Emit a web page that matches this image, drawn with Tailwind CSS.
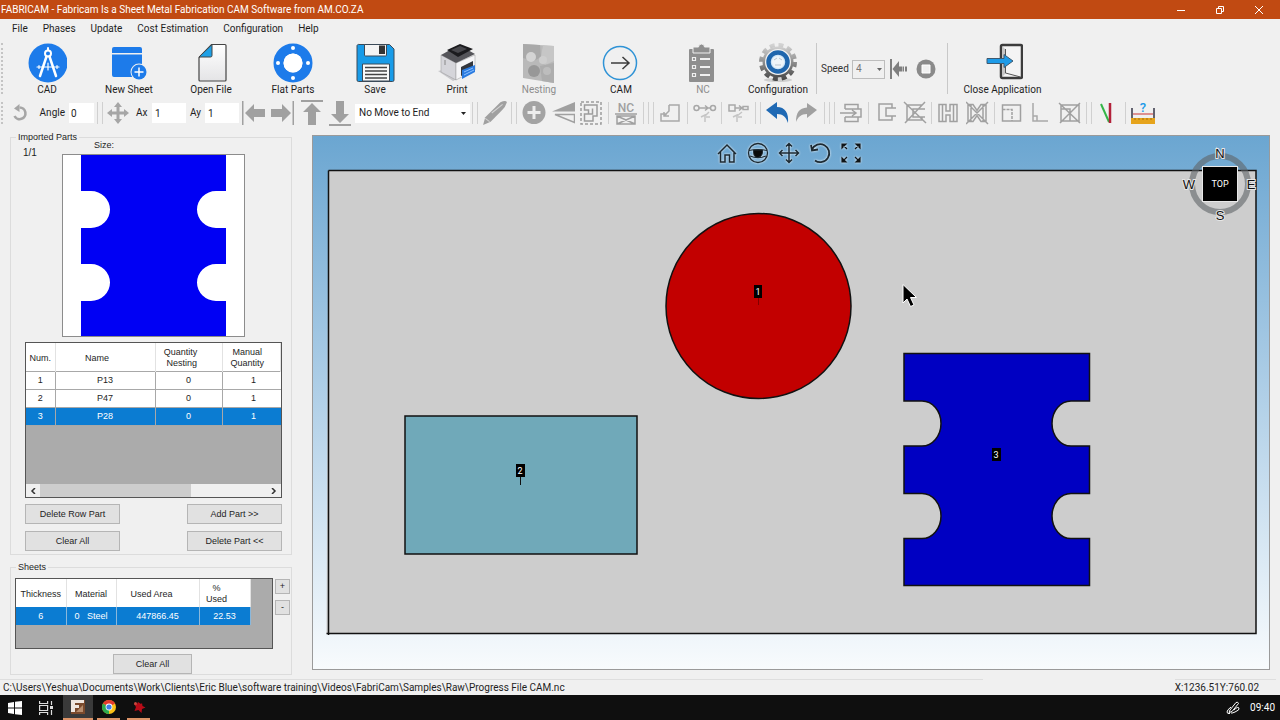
<!DOCTYPE html>
<html lang="en">

<head>
  <meta charset="UTF-8" />
  <meta name="viewport" content="width=device-width, initial-scale=1.0" />
  <title>FABRICAM</title>
  <script src="https://cdn.jsdelivr.net/npm/@tailwindcss/browser@4"></script>
</head>

<body class="h-screen flex flex-col overflow-hidden bg-[#f0f0f0] font-['Roboto','Open_Sans',sans-serif] text-[10px] leading-[14px] text-[#1e1e1e]">

  <!-- Title bar -->
  <header class="h-[19px] shrink-0 flex items-center justify-between bg-[#c14a12] text-white pl-px pr-[2px]">
    <h1>FABRICAM - Fabricam Is a Sheet Metal Fabrication CAM Software from AM.CO.ZA</h1>
    <div class="flex">
      <button type="button" aria-label="Minimize" class="w-[39px] flex justify-center">
        <svg class="size-[10px]" viewBox="0 0 10 10" stroke="#fff"><path d="M1 5.500h8" /></svg>
      </button>
      <button type="button" aria-label="Restore" class="w-[39px] flex justify-center">
        <svg class="size-[10px]" viewBox="0 0 10 10" fill="none" stroke="#fff"><path d="M1.500 3.500h5v5h-5zM3.500 3.500v-2h5v5h-2" /></svg>
      </button>
      <button type="button" aria-label="Close" class="w-[39px] flex justify-center">
        <svg class="size-[10px]" viewBox="0 0 10 10" stroke="#fff"><path d="M1 1l8 8M9 1l-8 8" /></svg>
      </button>
    </div>
  </header>

  <!-- Menu -->
  <nav class="h-5 shrink-0 flex items-center gap-[15px] pl-3">
    <button type="button">File</button>
    <button type="button">Phases</button>
    <button type="button">Update</button>
    <button type="button">Cost Estimation</button>
    <button type="button">Configuration</button>
    <button type="button">Help</button>
  </nav>

  <!-- Main toolbar -->
  <div class="h-[59px] shrink-0 flex pt-1">
    <div class="w-[3px] mr-[3px] mb-1 border-r-2 border-dotted border-[#c4c4c4]"></div>
    <button type="button" class="w-[82px] flex flex-col items-center">
      <svg class="size-10" viewBox="0 0 40 40">
        <circle cx="21" cy="20" r="19.500" fill="#1d7bea" />
        <g fill="none" stroke="#fff" stroke-linecap="round">
          <circle cx="21" cy="10.500" r="3" stroke-width="2" />
          <path d="M21 5v2" stroke-width="2" />
          <path d="M19.500 13.500L13 33M22.500 13.500L29 33" stroke-width="2.500" />
          <path d="M10 24h22M12 22.500v3M30 22.500v3M21 20v7" stroke-width="1.200" />
        </g>
      </svg>
      CAD
    </button>
    <button type="button" class="w-[82px] flex flex-col items-center">
      <svg class="size-10" viewBox="0 0 40 40">
        <path d="M5 4h26a2 2 0 0 1 2 2v4H3V6a2 2 0 0 1 2-2zM3 11.500h30V34H5a2 2 0 0 1-2-2z" fill="#1d7bea" />
        <circle cx="30" cy="29" r="8.500" fill="#f0f0f0" />
        <circle cx="30" cy="29" r="7.500" fill="#1d7bea" />
        <path d="M25.500 29h9M30 24.500v9" stroke="#fff" stroke-width="1.500" />
      </svg>
      New Sheet
    </button>
    <button type="button" class="w-[82px] flex flex-col items-center">
      <svg class="size-10" viewBox="0 0 40 40">
        <defs>
          <linearGradient id="paper" x1="0" y1="0" x2="0" y2="1">
            <stop offset="0" stop-color="#fff" />
            <stop offset="1" stop-color="#e4e4e6" />
          </linearGradient>
        </defs>
        <path d="M20.500 1.500H34a1 1 0 0 1 1 1V37a1 1 0 0 1-1 1H9a1 1 0 0 1-1-1V14.500z" fill="url(#paper)" stroke="#444" stroke-width="1.200" />
        <path d="M21 1.500v11a1.500 1.500 0 0 1-1.500 1.500H8z" fill="#1ea0e6" stroke="#444" />
      </svg>
      Open File
    </button>
    <button type="button" class="w-[82px] flex flex-col items-center">
      <svg class="size-10" viewBox="0 0 40 40">
        <circle cx="20" cy="20" r="14.500" fill="none" stroke="#1d7bea" stroke-width="10" />
        <g fill="#fff">
          <circle cx="20" cy="20" r="9.500" />
          <circle cx="20" cy="5" r="2" />
          <circle cx="20" cy="35" r="2" />
          <circle cx="5" cy="20" r="2" />
          <circle cx="35" cy="20" r="2" />
        </g>
      </svg>
      Flat Parts
    </button>
    <button type="button" class="w-[82px] flex flex-col items-center">
      <svg class="size-10" viewBox="0 0 40 40">
        <path d="M4 1.500h30.500L39 6v31a1.500 1.500 0 0 1-1.500 1.500h-34A1.500 1.500 0 0 1 2 37V3a1.500 1.500 0 0 1 2-1.500z" fill="#189be8" stroke="#3b4a58" />
        <path d="M9.500 1.500h22V12a1 1 0 0 1-1 1h-20a1 1 0 0 1-1-1z" fill="#f4f4f4" stroke="#3b4a58" />
        <path d="M24 2.500h6v8.500h-6z" fill="#333" />
        <path d="M7.500 21h27v17h-27z" fill="#fafafa" stroke="#3b4a58" />
        <path d="M10 24.500h22M10 28h22M10 31.500h22M10 35h22" stroke="#444" stroke-width="1.500" />
      </svg>
      Save
    </button>
    <button type="button" class="w-[82px] flex flex-col items-center">
      <svg class="size-10" viewBox="0 0 40 40">
        <path d="M1 28l15 10 22-11-6-6z" fill="#c9c9cd" />
        <path d="M4 12l15 8v17L4 29z" fill="#d5d5da" stroke="#999" stroke-width=".5" />
        <path d="M19 20l19-8v15l-19 10z" fill="#f5f5f7" stroke="#999" stroke-width=".5" />
        <path d="M4 12L22 2l16 9-19 9z" fill="#55555a" />
        <path d="M10 7l13-6 13 5-15 8z" fill="#1b1b1e" />
        <path d="M14 7l9-4 7 3-9 4z" fill="#47474c" />
        <path d="M24 24l12-6v9l-12 6z" fill="#33373e" />
        <path d="M25 27l13-5v7l-13 7z" fill="#2a7be0" />
        <path d="M27 29l9-4M27 32l10-5" stroke="#8cc0ff" />
        <path d="M8 17v5" stroke="#888" />
      </svg>
      Print
    </button>
    <button type="button" disabled class="w-[82px] flex flex-col items-center text-[#8d8d8d]">
      <svg class="size-10" viewBox="0 0 40 40">
        <path d="M4 1l31 2v37l-31-5z" fill="#b9b9b9" />
        <path d="M4 1l17 1 1 12-7 4-11-3z" fill="#a9a9a9" />
        <path d="M24 2.500l11 .5v15l-9 4-4-8z" fill="#c6c6c6" />
        <path d="M21 23l14-3v20l-12-2z" fill="#adadad" />
        <circle cx="12" cy="14" r="5" fill="#d4d4d4" />
        <circle cx="24" cy="17" r="4" fill="#cecece" />
        <circle cx="15" cy="28" r="6" fill="#989898" />
        <circle cx="28" cy="28" r="4" fill="#bdbdbd" />
      </svg>
      Nesting
    </button>
    <button type="button" class="w-[82px] flex flex-col items-center">
      <svg class="size-10" viewBox="0 0 40 40" fill="none">
        <circle cx="19" cy="20" r="16.500" stroke="#2f93d6" stroke-width="1.500" />
        <path d="M10 20h18M21.500 14l6.500 6-6.500 6" stroke="#3c3c3c" stroke-width="1.500" />
      </svg>
      CAM
    </button>
    <button type="button" disabled class="w-[82px] flex flex-col items-center text-[#8d8d8d]">
      <svg class="size-10" viewBox="0 0 40 40">
        <path d="M7 6h23a1 1 0 0 1 1 1v31a1 1 0 0 1-1 1H7a1 1 0 0 1-1-1V7a1 1 0 0 1 1-1z" fill="#8f8f8f" />
        <path d="M10 4h5.500a3 3 0 0 1 6 0H27v6H10z" fill="#8f8f8f" stroke="#f0f0f0" />
        <path d="M17 16h10M17 24h10M17 32h10" stroke="#f0f0f0" stroke-width="2" />
        <path d="M9.500 14.500h3v3h-3zM9.500 22.500h3v3h-3zM9.500 30.500h3v3h-3z" fill="none" stroke="#f0f0f0" stroke-width="1.200" />
      </svg>
      NC
    </button>
    <button type="button" class="w-[68px] flex flex-col items-center">
      <svg class="size-10" viewBox="0 0 40 40">
        <defs>
          <linearGradient id="steel" x1="0" y1="0" x2="0" y2="1">
            <stop offset="0" stop-color="#d2d2d2" />
            <stop offset="1" stop-color="#4c4c4c" />
          </linearGradient>
        </defs>
        <ellipse cx="20" cy="37" rx="14" ry="2" fill="#cfcfcf" />
        <circle cx="20" cy="19" r="17" fill="none" stroke="url(#steel)" stroke-width="4" stroke-dasharray="5 3.900" />
        <circle cx="20" cy="19" r="15.500" fill="url(#steel)" />
        <circle cx="20" cy="19" r="13" fill="#f2f2f2" />
        <circle cx="20" cy="19" r="9.500" fill="#cfe6f8" stroke="#1f66ad" stroke-width="4.500" />
        <circle cx="20" cy="19" r="6" fill="#eef4f8" />
        <path d="M16 17l3-2M21 15l3 2M17 22h6" stroke="#b8c4cf" />
      </svg>
      Configuration
    </button>
    <div class="w-[5px] mb-1 border-r border-[#c8c8c8]"></div>
    <div class="w-[122px] h-[52px] flex items-center text-[#333]">
      <label for="speed" class="w-[35px] pl-1">Speed</label>
      <div class="relative">
        <select id="speed" class="w-[33px] h-[19px] appearance-none border border-[#bdbdbd] bg-[#f0f0f0] pl-[3px] text-[#777]">
          <option>4</option>
        </select>
        <svg class="absolute right-[3px] top-[8px] w-[5px] h-[3px]" viewBox="0 0 5 3"><path d="M0 0h5l-2.500 3z" fill="#666" /></svg>
      </div>
      <button type="button" aria-label="Step back" class="w-7 flex justify-center">
        <svg class="w-[18px] h-5" viewBox="0 0 18 20" fill="#7f7f7f"><path d="M0 0h2v20H0zM2.500 10L9 2v5.500h3v5H9V18zM12.500 7.500H14v5h-1.500zM15 7.500h2v5h-2z" /></svg>
      </button>
      <button type="button" aria-label="Stop" class="w-[26px] flex justify-center">
        <svg class="size-5" viewBox="0 0 20 20"><circle cx="10" cy="10" r="9.500" fill="#8a8a8a" /><path d="M6 6h8v8H6z" fill="#f0f0f0" stroke="#fff" /></svg>
      </button>
    </div>
    <div class="w-[9px] mb-1 border-r border-[#c8c8c8]"></div>
    <button type="button" class="w-[109px] flex flex-col items-center">
      <svg class="size-10" viewBox="0 0 40 40">
        <rect x="18" y="2" width="21" height="33" rx="1.500" fill="#f4f4f4" stroke="#3c3c3c" stroke-width="2.500" />
        <path d="M19.500 3.500l3 3v24l-3 3z" fill="#c6c6c6" />
        <path d="M22.500 6v24l15 4" fill="none" stroke="#555" />
        <path d="M4 15.500h17v-4l9 6.500-9 6.500v-4H4z" fill="#1d9be8" stroke="#3f5a70" />
      </svg>
      Close Application
    </button>
  </div>

  <!-- Edit toolbar -->
  <div class="h-[30px] shrink-0 flex items-center [&>button]:flex [&>button]:justify-center [&>button]:shrink-0">
    <div class="w-[3px] mr-1 h-[22px] border-r-2 border-dotted border-[#c4c4c4]"></div>
    <button type="button" aria-label="Rotate" class="w-6">
      <svg class="size-[18px]" viewBox="0 0 18 18"><path d="M9.500 3.500a5.800 5.800 0 1 1-5 8.500" fill="none" stroke="#a6a6a6" stroke-width="2.600" /><path d="M4 4.500L9.500 0v8z" fill="#a6a6a6" /></svg>
    </button>
    <label for="angle" class="w-[38px] pr-1 text-right">Angle</label>
    <input id="angle" value="0" class="w-[25px] h-5 bg-white pl-[2px] outline-none" />
    <div class="w-[12px] h-[22px] flex justify-center"><div class="w-[6px] border-x border-[#d0d0d0]"></div></div>
    <button type="button" aria-label="Move" class="w-6">
      <svg class="size-[22px]" viewBox="0 0 22 22"><path d="M11 0l4 5h-2.500v4.500H17V7l5 4-5 4v-2.500h-4.500V17H15l-4 5-4-5h2.500v-4.500H5V15l-5-4 5-4v2.500h4.500V5H7z" fill="#a6a6a6" /></svg>
    </button>
    <label for="ax" class="w-[22px] pl-[6px]">Ax</label>
    <input id="ax" value="1" class="w-[34px] h-5 bg-white pl-[3px] outline-none" />
    <label for="ay" class="w-[19px] text-center">Ay</label>
    <input id="ay" value="1" class="w-[34px] h-5 bg-white pl-[3px] outline-none" />
    <button type="button" aria-label="Move left" class="w-[29px]">
      <svg class="size-6" viewBox="0 0 24 24" fill="#a0a0a0"><path d="M0 0h1.500v24H0zM3 12l9-9v5h11v8H12v5z" /></svg>
    </button>
    <button type="button" aria-label="Move right" class="w-[29px]">
      <svg class="size-6" viewBox="0 0 24 24" fill="#a0a0a0"><path d="M21.500 0H23v24h-1.500zM20 12l-9-9v5H0v8h11v5z" /></svg>
    </button>
    <button type="button" aria-label="Move up" class="w-[29px]">
      <svg class="size-[26px]" viewBox="0 0 26 26" fill="#a0a0a0"><path d="M2 0h22v2H2zM13 3l9 9h-5v13H9V12H4z" /></svg>
    </button>
    <button type="button" aria-label="Move down" class="w-[29px]">
      <svg class="size-[26px]" viewBox="0 0 26 26" fill="#a0a0a0"><path d="M1 24h22v2H1zM12 23l9-9h-5V1H8v13H3z" /></svg>
    </button>
    <div class="relative">
      <select aria-label="Move to end" class="w-[115px] h-[19px] appearance-none bg-white pl-1">
        <option>No Move to End</option>
      </select>
      <svg class="absolute right-[4px] top-[8px] w-[5px] h-[3px]" viewBox="0 0 5 3"><path d="M0 0h5l-2.500 3z" fill="#222" /></svg>
    </div>
    <div class="w-[10px] h-[22px] flex justify-center"><div class="w-[6px] border-x border-[#d0d0d0]"></div></div>
    <button type="button" aria-label="Draw" class="w-[29px]">
      <svg class="size-[26px]" viewBox="0 0 24 24"><path d="M1 23l2-7L17 2q5-2 6 0-1 4-5 8L8 20z" fill="#a0a0a0" /><path d="M3 17l4 3M9 12L19 4" stroke="#d2d2d2" /></svg>
    </button>
    <div class="w-[10px] h-[22px] flex justify-center"><div class="w-[6px] border-x border-[#d0d0d0]"></div></div>
    <button type="button" aria-label="Add" class="w-[29px]">
      <svg class="size-6" viewBox="0 0 24 24"><circle cx="12" cy="11.500" r="11.500" fill="#a3a3a3" /><path d="M12 5v13M5.500 11.500h13" stroke="#ededed" stroke-width="3" /></svg>
    </button>
    <button type="button" aria-label="Mirror" class="w-[29px]">
      <svg class="size-6" viewBox="0 0 24 24"><path d="M1 10.500L24 1v9.500z" fill="#a0a0a0" /><path d="M4 13.500h19.500v8z" fill="none" stroke="#a0a0a0" stroke-width="1.500" /></svg>
    </button>
    <button type="button" aria-label="Select contour" class="w-[29px]">
      <svg class="size-6" viewBox="0 0 24 24" fill="none" stroke="#9c9c9c" stroke-width="1.500"><path d="M1 1h20v22H1z" stroke-dasharray="3 2" /><path d="M4.500 4H17v11h-4v5H4.500v-7h4V9h-4zM8.500 13h4V7.500" /></svg>
    </button>
    <div class="w-[5px] h-[22px] flex justify-center"><div class="border-l border-[#d0d0d0]"></div></div>
    <button type="button" aria-label="NC" class="w-[29px]">
      <svg class="w-6 h-[30px]" viewBox="0 0 24 30"><text x="12" y="14" text-anchor="middle" class="text-[12px] font-medium" fill="#a0a0a0">NC</text><path d="M3 18h18v8H3zM3 18l18 8M21 18L3 26M1 16h22" fill="none" stroke="#a0a0a0" stroke-width="1.500" /></svg>
    </button>
    <div class="w-4 h-[22px] flex justify-center"><div class="w-[6px] border-x border-[#d0d0d0]"></div><div class="w-[5px] border-r border-[#d0d0d0]"></div></div>
    <button type="button" aria-label="Lead in" class="w-[29px]">
      <svg class="size-6" viewBox="0 0 24 24" fill="none" stroke="#a8a8a8" stroke-width="1.500"><path d="M10 4h10v16H2v-7h6M10 4v6L5 15M5 11v4h5" /></svg>
    </button>
    <div class="w-[5px] h-[22px] flex justify-center"><div class="border-l border-[#d0d0d0]"></div></div>
    <button type="button" aria-label="Link circles" class="w-[29px]">
      <svg class="size-6" viewBox="0 0 24 24" fill="none" stroke="#a8a8a8" stroke-width="1.500"><circle cx="3.500" cy="7" r="2.500" /><circle cx="20" cy="7" r="2.500" /><path d="M6 7h11M12 4.500L15 7l-3 2.500" /><path d="M16 11l-4 4M8 16l4-2v7M13 16h4" stroke="#c4c4c4" /></svg>
    </button>
    <div class="w-[5px] h-[22px] flex justify-center"><div class="border-l border-[#d0d0d0]"></div></div>
    <button type="button" aria-label="Link parts" class="w-[29px]">
      <svg class="size-6" viewBox="0 0 24 24" fill="none" stroke="#a8a8a8" stroke-width="1.500"><path d="M2 4h6v6H2zM8 7h6M12 4.500L15 7l-3 2.500M16 5.500h5v3h-5z" /><path d="M15 11l-5 4M6 16l4-2v7M11 16h4" stroke="#c4c4c4" /></svg>
    </button>
    <div class="w-[10px] h-[22px] flex justify-center"><div class="w-[6px] border-x border-[#d0d0d0]"></div></div>
    <button type="button" aria-label="Undo" class="w-[29px]">
      <svg class="size-6" viewBox="0 0 24 24"><path d="M0 9l11-8v5c8 0 12 6 11 16-2-6-5-9-11-9v5z" fill="#1f69b4" /></svg>
    </button>
    <button type="button" aria-label="Redo" class="w-[29px]">
      <svg class="size-6" viewBox="0 0 24 24"><path d="M22 9L12 2v4.500C4 7 1 12 1 21c2-5 5-8 11-8v4z" fill="#a0a0a0" /></svg>
    </button>
    <div class="w-4 h-[22px] flex justify-center"><div class="w-[6px] border-x border-[#d0d0d0]"></div><div class="w-[5px] border-r border-[#d0d0d0]"></div></div>
    <button type="button" aria-label="Cut through" class="w-[29px]">
      <svg class="size-6" viewBox="0 0 24 24" fill="none" stroke="#a0a0a0" stroke-width="1.500"><path d="M5 8V3.500h13V8M5 16v4.500h13V16M5 8h16v8H5M0 12h16M12 9l4 3-4 3" /></svg>
    </button>
    <div class="w-[5px] h-[22px] flex justify-center"><div class="border-l border-[#d0d0d0]"></div></div>
    <button type="button" aria-label="Open contour" class="w-[29px]">
      <svg class="size-6" viewBox="0 0 24 24" fill="none" stroke="#a0a0a0" stroke-width="1.500"><path d="M18 7V3H5v16h13v-4M22 7H12v8h10" /></svg>
    </button>
    <button type="button" aria-label="Remove contour" class="w-[29px]">
      <svg class="size-6" viewBox="0 0 24 24" fill="none" stroke="#a0a0a0" stroke-width="1.500"><path d="M4 4h15M4 4v15h15v-3M22 8H10v8h12M1 1l22 21M22 1L2 22" /></svg>
    </button>
    <div class="w-[5px] h-[22px] flex justify-center"><div class="border-l border-[#d0d0d0]"></div></div>
    <button type="button" aria-label="Bridge" class="w-[29px]">
      <svg class="size-6" viewBox="0 0 24 24" fill="none" stroke="#a0a0a0" stroke-width="1.500"><path d="M2 3.500h7V10h4V3.500h7v17h-7V14H9v6.500H2zM5.500 4v16M16.500 4v16" /></svg>
    </button>
    <button type="button" aria-label="Remove bridge" class="w-[29px]">
      <svg class="size-6" viewBox="0 0 24 24" fill="none" stroke="#a0a0a0" stroke-width="1.500"><path d="M2 3.500h5l4 6 4-6h5v17h-5l-4-6-4 6H2zM5 4v16M17 4v16M0 1l22 22M22 1L0 23" /></svg>
    </button>
    <div class="w-[5px] h-[22px] flex justify-center"><div class="border-l border-[#d0d0d0]"></div></div>
    <button type="button" aria-label="Corner loop" class="w-[29px]">
      <svg class="size-6" viewBox="0 0 24 24" fill="none" stroke="#a0a0a0" stroke-width="1.500"><path d="M2.500 4h18v16h-18z" /><path d="M2.500 8.500H12V20" stroke-dasharray="3 1" /></svg>
    </button>
    <button type="button" aria-label="Corner" class="w-[29px]">
      <svg class="size-6" viewBox="0 0 24 24" fill="none" stroke="#a8a8a8" stroke-width="1.500"><path d="M4 2v18h15M4 15h4v5" /></svg>
    </button>
    <button type="button" aria-label="Remove corner" class="w-[29px]">
      <svg class="size-6" viewBox="0 0 24 24" fill="none" stroke="#a0a0a0" stroke-width="1.500"><path d="M3 4h18v16H3zM3 8h9v12M1 2l21 20M22 2L2 22" /></svg>
    </button>
    <div class="w-[10px] h-[22px] flex justify-center"><div class="w-[6px] border-x border-[#d0d0d0]"></div></div>
    <button type="button" aria-label="Cut angle" class="w-[29px]">
      <svg class="size-6" viewBox="0 0 24 24" fill="none"><path d="M4 3l8 18" stroke="#35b548" stroke-width="2" /><path d="M13 2v20" stroke="#b3213a" stroke-width="2.500" /></svg>
    </button>
    <div class="w-[5px] h-[22px] flex justify-center"><div class="border-l border-[#d0d0d0]"></div></div>
    <button type="button" aria-label="Measure" class="w-[29px]">
      <svg class="w-6 h-[30px]" viewBox="0 0 24 30"><text x="12" y="14" text-anchor="middle" class="text-[13px] font-medium" fill="#1d9be8">?</text><path d="M1 10v10M23 10v10" stroke="#334" stroke-width="1.500" /><path d="M2 16h20" stroke="#c33" /><path d="M0 20h24v6H0z" fill="#e6a41c" /><path d="M4 20v2M8 20v2M12 20v2M16 20v2M20 20v2" stroke="#a8710c" /></svg>
    </button>
  </div>

  <div class="flex-1 min-h-0 flex">

    <!-- Side panel -->
    <aside class="w-[312px] shrink-0 pl-[10px] pr-5 pt-[3px] font-['Liberation_Sans',Arial,sans-serif] text-[9px] leading-3">
      <fieldset class="border border-[#dcdcdc] pb-[3px] pl-[14px] pr-[9px]">
        <legend class="-ml-[9px] px-[2px]">Imported Parts</legend>
        <div class="flex items-start">
          <span class="w-[39px] pt-1 -ml-[2px] text-[10px]">1/1</span>
          <div class="-mt-1">
            <p class="pl-8">Size:</p>
            <svg class="size-[183px] mt-[3px] border border-[#8c8c8c] bg-white" viewBox="0 0 181 181">
              <path d="M18 0h145v36h-10a19 18.500 0 0 0 0 37h10v36h-10a19 18.500 0 0 0 0 37h10v35H18v-35h10a19 18.500 0 0 0 0-37H18V73h10a19 18.500 0 0 0 0-37H18z" fill="#0000f4" />
            </svg>
          </div>
        </div>

        <div class="mt-[5px] h-[156px] flex flex-col border border-[#555] bg-[#ababab]">
          <table class="w-full table-fixed border-collapse text-center">
            <colgroup><col class="w-[29px]" /><col class="w-[100px]" /><col class="w-[67px]" /><col /></colgroup>
            <thead>
              <tr class="h-7 bg-white leading-[11px] [&>th]:font-normal [&>th]:border-r [&>th]:border-[#e2e2e2] [&>th]:pt-[3px]">
                <th>Num.</th>
                <th class="pr-4">Name</th>
                <th class="pr-4">Quantity<br />&nbsp;Nesting</th>
                <th class="pr-2">Manual<br />Quantity</th>
              </tr>
            </thead>
            <tbody class="[&_td]:border [&_td]:border-[#a8a8a8] [&_td:first-child]:border-l-0 [&_td:last-child]:border-r-0 [&_td]:p-0">
              <tr class="h-[18px] bg-white"><td>1</td><td>P13</td><td>0</td><td class="pl-1!">1</td></tr>
              <tr class="h-[18px] bg-white"><td>2</td><td>P47</td><td>0</td><td class="pl-1!">1</td></tr>
              <tr class="h-[18px] bg-[#0b7cd2] text-white"><td>3</td><td>P28</td><td>0</td><td class="pl-1!">1</td></tr>
            </tbody>
          </table>
          <div class="mt-auto h-[13px] flex bg-[#f0f0f0]">
            <button type="button" aria-label="Scroll left" class="w-[14px] flex items-center justify-center">
              <svg class="size-[6px]" viewBox="0 0 6 6" fill="none" stroke="#333" stroke-width="1.500"><path d="M5 0L2 3l3 3" /></svg>
            </button>
            <div class="flex-1"><div class="w-2/3 h-full bg-[#cdcdcd]"></div></div>
            <button type="button" aria-label="Scroll right" class="w-[14px] flex items-center justify-center">
              <svg class="size-[6px]" viewBox="0 0 6 6" fill="none" stroke="#333" stroke-width="1.500"><path d="M1 0l3 3-3 3" /></svg>
            </button>
          </div>
        </div>

        <div class="mt-[6px] grid grid-cols-[95px_95px] justify-between gap-y-[7px] [&>button]:h-5 [&>button]:border [&>button]:border-[#b5b5b5] [&>button]:bg-[#e1e1e1]">
          <button type="button">Delete Row Part</button>
          <button type="button">Add Part &gt;&gt;</button>
          <button type="button">Clear All</button>
          <button type="button">Delete Part &lt;&lt;</button>
        </div>
      </fieldset>

      <fieldset class="mt-[6px] border border-[#dcdcdc] pl-1 pr-px">
        <legend class="ml-px px-[2px]">Sheets</legend>
        <div class="flex justify-between pt-[5px]">
          <div class="w-[258px] h-[71px] border border-[#555] bg-[#ababab]">
            <table class="w-[234px] table-fixed border-collapse text-center">
              <colgroup><col class="w-[50px]" /><col class="w-[50px]" /><col class="w-[83px]" /><col class="w-[51px]" /></colgroup>
              <thead>
                <tr class="h-7 bg-white leading-[11px] [&>th]:font-normal [&>th]:border-r [&>th]:border-[#e2e2e2] [&>th]:pt-[2px]">
                  <th>Thickness</th>
                  <th>Material</th>
                  <th class="pr-3">Used Area</th>
                  <th class="pr-4">%<br />Used</th>
                </tr>
              </thead>
              <tbody>
                <tr class="h-[18px] bg-[#0b7cd2] text-white [&>td]:p-0 [&>td]:border-r [&>td]:border-[#8ab8dc]">
                  <td>6</td><td class="whitespace-pre">0   Steel</td><td>447866.45</td><td>22.53</td>
                </tr>
              </tbody>
            </table>
          </div>
          <div class="flex flex-col gap-[6px] pt-px [&>button]:size-[15px] [&>button]:border [&>button]:border-[#b5b5b5] [&>button]:bg-[#e1e1e1] [&>button]:leading-none">
            <button type="button">+</button>
            <button type="button">-</button>
          </div>
        </div>
        <button type="button" class="mt-[5px] mx-auto block w-[79px] h-5 border border-[#b5b5b5] bg-[#e1e1e1]">Clear All</button>
      </fieldset>
    </aside>

    <!-- 3D view -->
    <main class="relative flex-1 min-w-0 mt-[7px] mb-[9px] mr-[10px] border border-[#9a9a9a] bg-linear-to-b from-[#6ba6d1] to-[#f8fbfd]">
      <svg class="block w-full h-full" viewBox="0 0 956 533" preserveAspectRatio="none">
        <path d="M15.500 34.500H943v463H13.500M15.500 34.500V499" fill="#cdcdcd" stroke="#111" stroke-width="1.500" />
        <g stroke="#111" stroke-width="1.500">
          <circle cx="445.500" cy="170" r="92.500" fill="#c20000" />
          <rect x="92" y="280" width="232" height="138" fill="#70a9b9" />
          <path d="M591 217.500h185.500V265H758a19 22.500 0 0 0 0 45h18.500v47.500H758a19 22.500 0 0 0 0 45h18.500v47H591v-47h18a19 22.500 0 0 0 0-45h-18V310h18a19 22.500 0 0 0 0-45h-18z" fill="#0000c2" />
        </g>
        <path d="M207.500 338v11" stroke="#111" />
        <path d="M445.500 158v11" stroke="#800000" />
        <path d="M441 149h8v13h-8zM203 328h9v13h-9zM679 312h9v13h-9z" fill="#000" />
        <g fill="#fff" text-anchor="middle" class="text-[9px]">
          <text x="445" y="159">1</text>
          <text x="207" y="338">2</text>
          <text x="683" y="322">3</text>
        </g>
        <path d="M590 148.500v18.500l4-4 3.500 7.500 3.500-1.500-3.500-7.500h6z" fill="#000" stroke="#fff" />
      </svg>

      <div class="absolute top-[6px] left-1/2 -translate-x-1/2 flex gap-[9px] pr-1 drop-shadow-[0_0_1px_#fff]">
        <button type="button" aria-label="Home">
          <svg class="size-[22px]" viewBox="0 0 22 22" fill="none" stroke="#1c2a33" stroke-width="1.500"><path d="M2 12l9-9 9 9M4.500 10v10H9v-7h4.500v7H18V10" /></svg>
        </button>
        <button type="button" aria-label="View">
          <svg class="size-[22px]" viewBox="0 0 22 22" fill="none" stroke="#1c2a33"><circle cx="11" cy="11" r="9.500" stroke-width="1.300" /><path d="M2 8.500q9-2 18 0M3 14q8 3.500 16 0" stroke-width="1.200" /><path d="M6.500 8h9q.5 7-4.500 7.500T6.500 8z" fill="#0a0a0a" /></svg>
        </button>
        <button type="button" aria-label="Pan">
          <svg class="size-[22px]" viewBox="0 0 22 22" fill="none" stroke="#1c2a33" stroke-width="1.500"><path d="M11 1.500v19M1.500 11h19M8 4.500l3-3 3 3M8 17.500l3 3 3-3M4.500 8l-3 3 3 3M17.500 8l3 3-3 3" /></svg>
        </button>
        <button type="button" aria-label="Rotate view">
          <svg class="size-[22px]" viewBox="0 0 22 22" fill="none" stroke="#1c2a33" stroke-width="1.800"><path d="M3 7.500A9 9 0 1 1 6 18.500M2 3l1 5.500 6-1" /></svg>
        </button>
        <button type="button" aria-label="Zoom fit">
          <svg class="size-[22px]" viewBox="0 0 22 22" fill="#0f1519" stroke="#0f1519" stroke-width="1.200"><path d="M2 6V2h4zM3 3l4 4M20 6V2h-4zM19 3l-4 4M2 16v4h4zM3 19l4-4M20 16v4h-4zM19 19l-4-4" /></svg>
        </button>
      </div>

      <!-- View cube -->
      <svg class="absolute top-[10px] right-[12px] w-[75px] h-[76px]" viewBox="0 0 75 76" text-anchor="middle">
        <circle cx="38" cy="38" r="28" fill="none" stroke="#5f6468" stroke-opacity=".6" stroke-width="6" />
        <rect x="20.500" y="20.500" width="35" height="35" fill="#000" stroke="#e8e8e8" />
        <text x="38" y="41" fill="#fff" class="text-[9px]">TOP</text>
        <g fill="#111" stroke="#e6e6e6" stroke-width="2" paint-order="stroke" class="font-['Liberation_Sans',Arial,sans-serif] text-[13px]">
          <text x="38" y="12">N</text>
          <text x="7" y="43">W</text>
          <text x="69" y="43">E</text>
          <text x="38" y="74">S</text>
        </g>
      </svg>
    </main>
  </div>

  <!-- Status bar -->
  <footer class="h-4 shrink-0 flex justify-between pr-1">
    <div class="w-[77%] border-t border-[#dedede] pl-[3px] pt-px">C:\Users\Yeshua\Documents\Work\Clients\Eric Blue\software training\Videos\FabriCam\Samples\Raw\Progress File CAM.nc</div>
    <div class="border-t border-[#dedede] pr-[17px] pt-px">X:1236.51Y:760.02</div>
  </footer>

  <!-- Taskbar -->
  <div class="h-[25px] shrink-0 flex bg-[#0f0f0f] text-white">
    <button type="button" aria-label="Start" class="w-[29px] flex items-center justify-center">
      <svg class="size-[14px]" viewBox="0 0 14 14" fill="#fff"><path d="M0 2l6-1v5.500H0zM7 .8L14 0v6.500H7zM0 7.500h6V13l-6-1zM7 7.500h7V14l-7-.8z" /></svg>
    </button>
    <button type="button" aria-label="Task view" class="w-[34px] flex items-center justify-center">
      <svg class="size-[14px]" viewBox="0 0 14 14" fill="none" stroke="#ddd" stroke-width="1.200"><path d="M.6 0v2.500h8V0M.6 4.500h8v5h-8zM.6 14v-2.500h8V14M12.500 0v4M12.500 9v5" /><path d="M11 5h3v3h-3z" fill="#ddd" stroke="none" /></svg>
    </button>
    <button type="button" aria-label="Fabricam" class="w-[30px] flex items-center justify-center bg-[#3a3a3a] border-b-2 border-[#dd9468]">
      <svg class="size-[14px]" viewBox="0 0 14 14"><path d="M0 0h14v14H0z" fill="#7a4a2c" /><path d="M0 0h13v3H4v2h4v3H4v4H0z" fill="#efe6de" /><path d="M5 12l7-7v7z" fill="#b78d6d" /></svg>
    </button>
    <button type="button" aria-label="Chrome" class="ml-1 w-[23px] flex items-center justify-center border-b-2 border-[#dd9468]">
      <svg class="size-[14px]" viewBox="0 0 14 14"><circle cx="7" cy="7" r="7" fill="#fbc116" /><path d="M7 7L.9 3.500A7 7 0 0 1 13.100 3.500z" fill="#e33b2e" /><path d="M7 7v7A7 7 0 0 1 .9 3.500z" fill="#2da94f" /><circle cx="7" cy="7" r="3.400" fill="#fff" /><circle cx="7" cy="7" r="2.600" fill="#3f7ee8" /></svg>
    </button>
    <button type="button" aria-label="Recorder" class="ml-[7px] w-[23px] flex items-center justify-center border-b-2 border-[#dd9468]">
      <svg class="size-[14px]" viewBox="0 0 14 14"><path d="M6 2l3 2 1-1 .5 3 3 1.500-3.500 1.500-.5 4-3-3-4 1 1.500-4-2-3h3z" fill="#b80c18" /><circle cx="3.500" cy="3.500" r="1.500" fill="#c8483e" /></svg>
    </button>
    <div class="ml-auto flex items-center gap-[10px] pr-[5px]">
      <svg class="size-[14px]" viewBox="0 0 14 14" fill="none" stroke="#fff"><path d="M4 9l6-7.500q2-1 2.500 1L6 10.500l-3 1zM8 9q4-4 5-2t-4 4-3 .5M5 6Q1 9 1 11t3 1.500" /></svg>
      <time>09:40</time>
    </div>
  </div>

</body>

</html>
